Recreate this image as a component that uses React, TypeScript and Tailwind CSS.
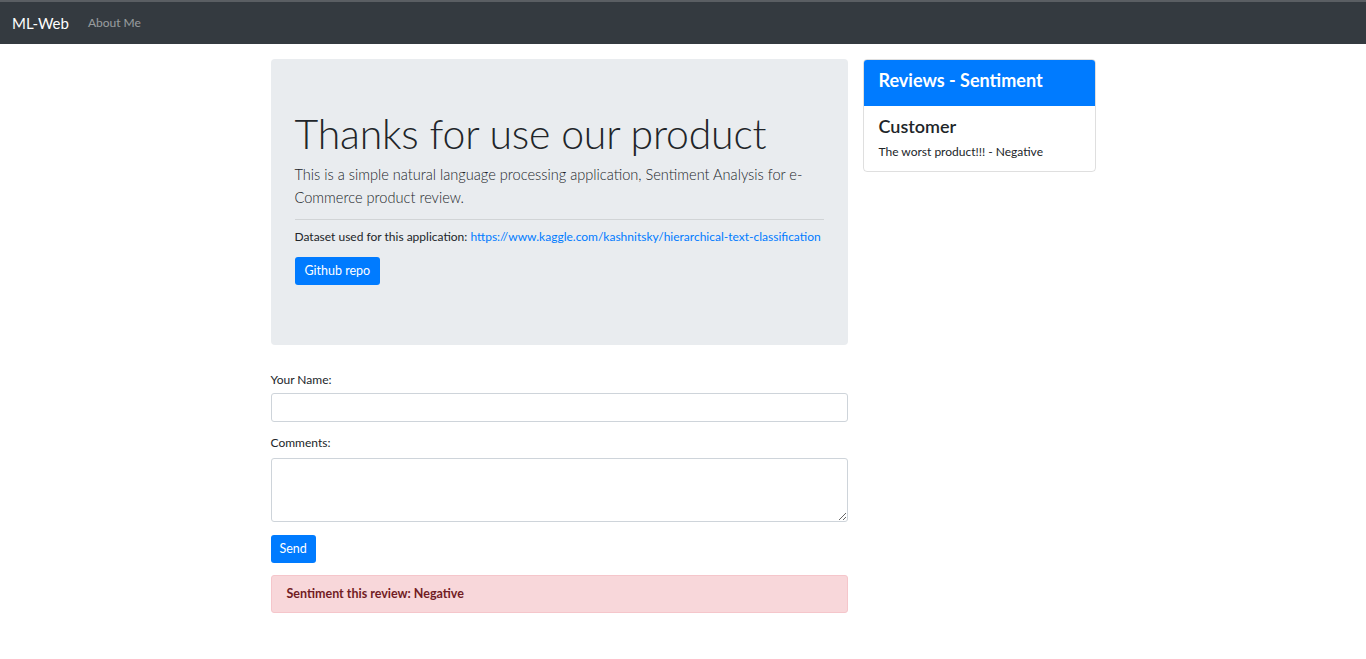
export default function App() {
  return (
    <div className="min-h-[659px] bg-white font-['Lato','Open_Sans',sans-serif] text-[#212529]">
      {/* Navbar */}
      <nav className="h-[44px] bg-[#343a40] border-t-2 border-[#5a5e63] flex items-center px-[12px]">
        <span className="text-[15px] text-white mr-[19px]">ML-Web</span>
        <span className="text-[12px] text-white/50">About Me</span>
      </nav>

      <div className="mx-auto w-[825px] flex gap-[15px] mt-[15px] items-start">
        {/* Left column */}
        <div className="w-[577px] shrink-0">
          <div className="h-[286px] bg-[#e9ecef] rounded-[4px] px-[24px] pt-[50px]">
            <h1 className="text-[41px] leading-[50px] font-light tracking-[-0.2px]">
              Thanks for use our product
            </h1>
            <p className="text-[14.6px] leading-[22.5px] font-light mt-[5px]">
              This is a simple natural language processing application, Sentiment Analysis for e-Commerce product review.
            </p>
            <hr className="border-t border-black/10 mt-[10px] mb-[7px]" />
            <p className="text-[12px] leading-[19px] whitespace-nowrap">
              Dataset used for this application:{' '}
              <a className="text-[#007bff]">https://www.kaggle.com/kashnitsky/hierarchical-text-classification</a>
            </p>
            <button className="mt-[11px] h-[28px] px-[10px] rounded-[3px] bg-[#007bff] text-white text-[12.5px]">
              Github repo
            </button>
          </div>

          {/* Form */}
          <div className="mt-[26px]">
            <label className="block text-[12px] leading-[18px]">Your Name:</label>
            <input className="mt-[4px] block w-full h-[29px] border border-[#ced4da] rounded-[3px] bg-white" />
            <label className="block text-[12px] leading-[18px] mt-[12px]">Comments:</label>
            <textarea className="mt-[6px] block w-full h-[64px] border border-[#ced4da] rounded-[3px] bg-white" />
            <button className="mt-[13px] h-[28px] px-[9px] rounded-[3px] bg-[#007bff] text-white text-[12.5px]">
              Send
            </button>
            <div className="mt-[12px] h-[38px] flex items-center px-[15px] bg-[#f8d7da] border border-[#f5c6cb] rounded-[3px] text-[#721c24] text-[12.5px] font-bold">
              Sentiment this review: Negative
            </div>
          </div>
        </div>

        {/* Right column */}
        <div className="w-[233px] shrink-0 border border-black/[0.125] rounded-[4px] overflow-hidden">
          <div className="h-[46px] bg-[#007bff] flex items-start pt-[8px] px-[15px]">
            <span className="text-white text-[18px] leading-[24px] font-bold">Reviews - Sentiment</span>
          </div>
          <div className="px-[15px] pt-[9px] pb-[10px]">
            <div className="text-[18px] font-semibold leading-[22px]">Customer</div>
            <div className="text-[12px] mt-[6px] leading-[18px]">The worst product!!! - Negative</div>
          </div>
        </div>
      </div>
    </div>
  )
}
